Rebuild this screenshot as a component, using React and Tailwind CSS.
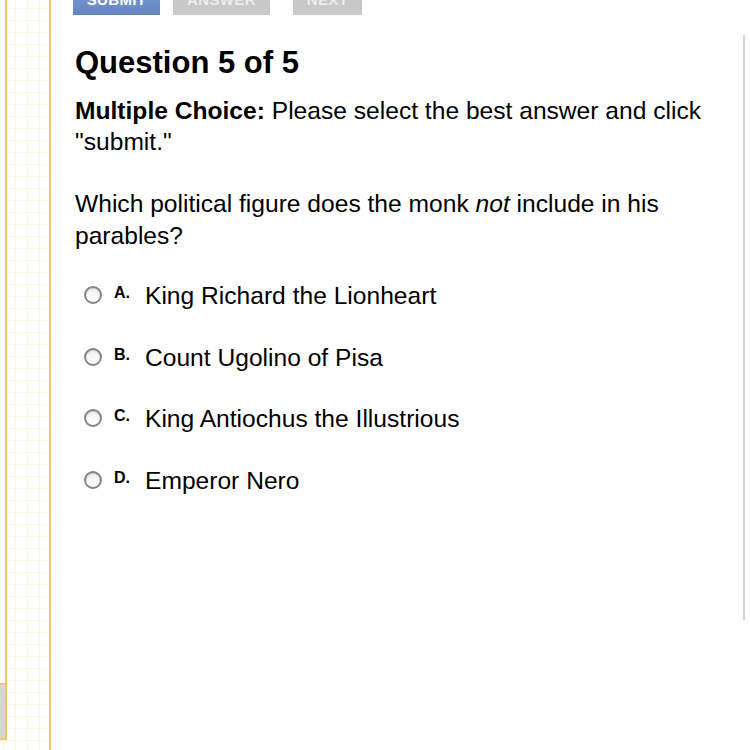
export default function App() {
  const options = [
    ["A.", "King Richard the Lionheart"],
    ["B.", "Count Ugolino of Pisa"],
    ["C.", "King Antiochus the Illustrious"],
    ["D.", "Emperor Nero"],
  ];
  return (
    <div className="w-[750px] h-[750px] bg-white flex overflow-hidden font-['Liberation_Sans',Arial,sans-serif] text-black">
      <div className="w-[51px] h-full shrink-0 border-r-2 border-[#efc46a] bg-[linear-gradient(to_right,#fdf4e2_1px,transparent_1px),linear-gradient(to_bottom,#fdf4e2_1px,transparent_1px)] bg-[size:12px_12px] bg-[position:3px_8px] flex flex-col">
        <div className="w-[7px] h-[683px] border-r-2 border-[#efc46a] bg-white"></div>
        <div className="w-[7px] h-[57px] bg-[#d6d6d6] border-2 border-l-0 border-[#efc46a]"></div>
      </div>
      <div className="flex-1 pl-[24px] flex flex-col">
        <div className="flex mt-[-14px] ml-[-2px] h-[29px]">
          <div className="w-[87px] h-[29px] bg-[linear-gradient(to_bottom,#7f9dd3,#6485c2)] text-white text-[15px] font-bold tracking-wide flex items-center justify-center">SUBMIT</div>
          <div className="ml-[13px] w-[97px] h-[29px] bg-[#c8c8c8] text-[#ececec] text-[15px] font-bold tracking-wide flex items-center justify-center">ANSWER</div>
          <div className="ml-[23px] w-[69px] h-[29px] bg-[#c8c8c8] text-[#ececec] text-[15px] font-bold tracking-wide flex items-center justify-center">NEXT</div>
        </div>
        <h1 className="mt-[30px] text-[31px] leading-[36px] font-bold">Question 5 of 5</h1>
        <p className="mt-[14px] text-[24.6px] leading-[31px] w-[650px]">
          <span className="font-bold">Multiple Choice:</span> Please select the best answer and click "submit."
        </p>
        <p className="mt-[31px] text-[24.6px] leading-[32px] w-[650px]">
          Which political figure does the monk <i>not</i> include in his parables?
        </p>
        <div className="mt-[28px] flex flex-col gap-[30.5px]">
          {options.map(([l, t]) => (
            <div key={l} className="flex items-start h-[31px]">
              <div className="ml-[9px] mt-[6px] w-[18px] h-[18px] rounded-full border-2 border-[#858585] bg-[linear-gradient(to_bottom,#f0f0f0,#ffffff)] shadow-[inset_0_1px_1px_rgba(0,0,0,0.15)]"></div>
              <div className="ml-[12px] mt-[5px] w-[31px] text-[16px] leading-4 font-bold">{l}</div>
              <div className="text-[24.6px] leading-[31px]">{t}</div>
            </div>
          ))}
        </div>
      </div>
      <div className="w-[2px] h-[585px] mt-[35px] bg-[#d4d4d4] shrink-0"></div>
      <div className="w-[5px] shrink-0"></div>
    </div>
  );
}
